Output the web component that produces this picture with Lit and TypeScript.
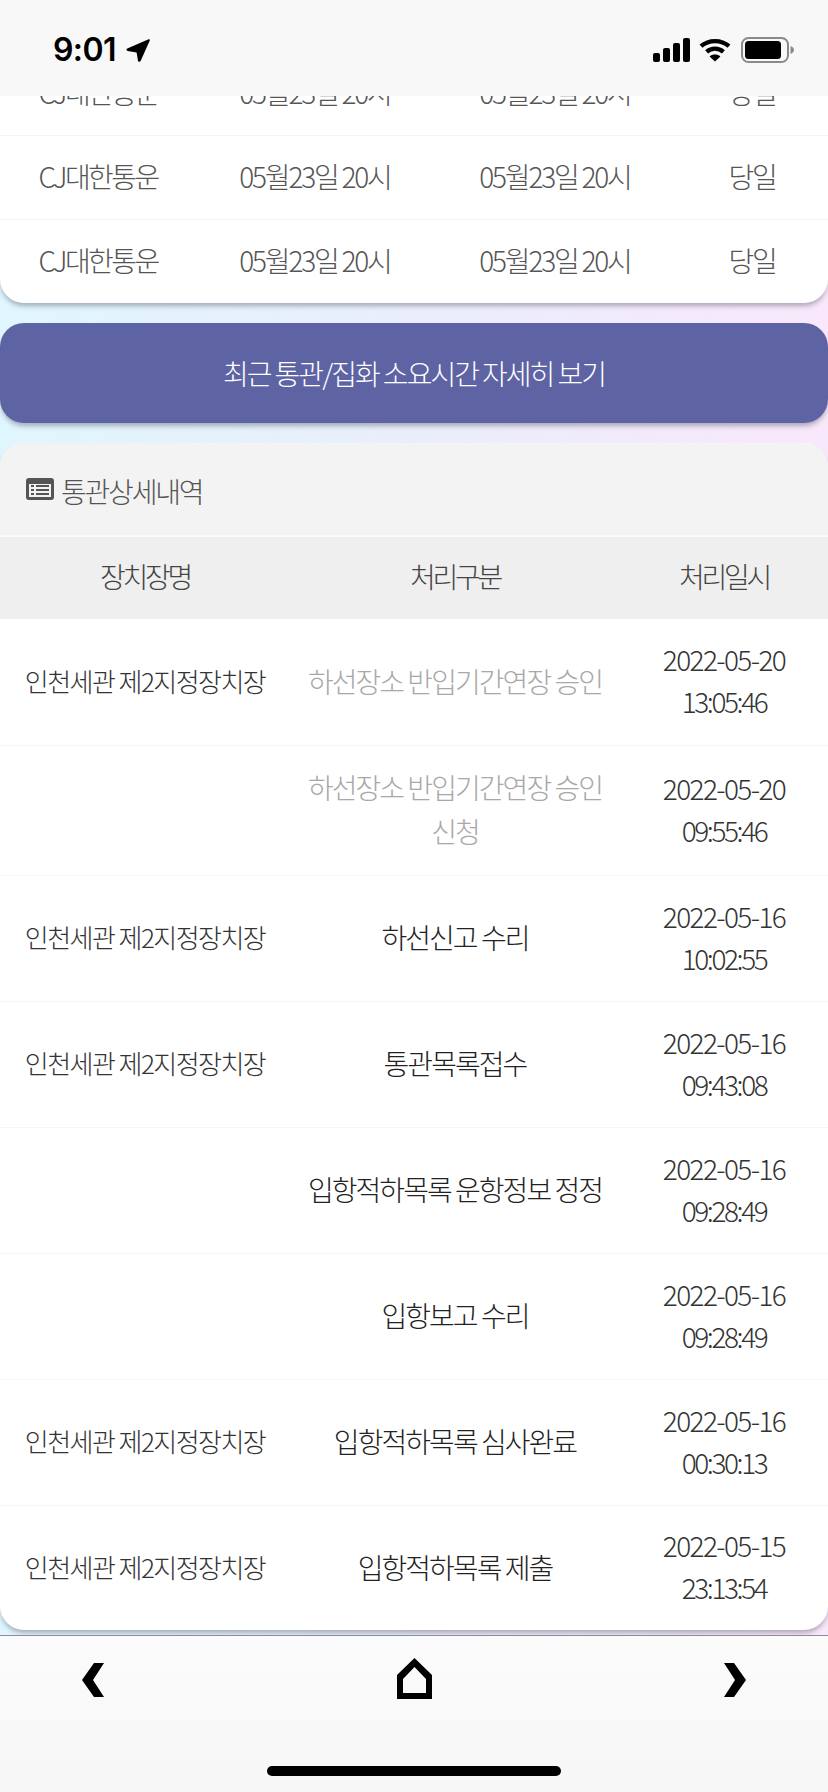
import { LitElement, html, css, svg } from "lit";
import { customElement } from "lit/decorators.js";

const carrierRows = [0, 1, 2];

const detailRows = [
  { place: "인천세관 제2지정장치장", kind: ["하선장소 반입기간연장 승인"], muted: true, d: "2022-05-20", t: "13:05:46" },
  { place: "", kind: ["하선장소 반입기간연장 승인", "신청"], muted: true, d: "2022-05-20", t: "09:55:46" },
  { place: "인천세관 제2지정장치장", kind: ["하선신고 수리"], muted: false, d: "2022-05-16", t: "10:02:55" },
  { place: "인천세관 제2지정장치장", kind: ["통관목록접수"], muted: false, d: "2022-05-16", t: "09:43:08" },
  { place: "", kind: ["입항적하목록 운항정보 정정"], muted: false, d: "2022-05-16", t: "09:28:49" },
  { place: "", kind: ["입항보고 수리"], muted: false, d: "2022-05-16", t: "09:28:49" },
  { place: "인천세관 제2지정장치장", kind: ["입항적하목록 심사완료"], muted: false, d: "2022-05-16", t: "00:30:13" },
  { place: "인천세관 제2지정장치장", kind: ["입항적하목록 제출"], muted: false, d: "2022-05-15", t: "23:13:54" },
];

@customElement("app-root")
export class AppRoot extends LitElement {
  static styles = css`
    :host {
      display: flex;
      flex-direction: column;
      width: 828px;
      height: 1792px;
      overflow: hidden;
      font-family: "Noto Sans CJK KR", "Noto Sans", sans-serif;
      font-weight: 300;
      background: #f8f8f8;
    }
    .status {
      flex: none;
      height: 96px;
      background: #f8f8f8;
      display: flex;
      align-items: flex-start;
      padding: 37px 34px 0 53px;
      box-sizing: border-box;
      position: relative;
      z-index: 2;
    }
    .clock {
      font-family: Inter, sans-serif;
      font-weight: 600;
      font-size: 32px;
      line-height: 26px;
      color: #000;
      letter-spacing: -0.6px;
    }
    .arrow { margin: 1px 0 0 10px; width: 24px; height: 24px; }
    .status-right { margin-left: auto; display: flex; align-items: flex-start; gap: 9px; }
    .signal { width: 37px; height: 24px; margin-top: 1px; }
    .wifi { width: 32px; height: 25px; }
    .battery { width: 53px; height: 26px; margin-left: 1px; }

    .content {
      flex: none;
      height: 1539px;
      overflow: hidden;
      background: linear-gradient(90deg, #e0f6fe 0%, #eaeefc 50%, #f9e8fb 100%);
    }
    .scroll { margin-top: -44px; display: flex; flex-direction: column; }

    .card {
      background: #fff;
      border-radius: 0 0 24px 24px;
      box-shadow: 0 4px 5px -1px rgba(60, 60, 80, 0.38);
    }
    .c-row {
      display: grid;
      grid-template-columns: 196px 238px 242px 152px;
      height: 84px;
      box-sizing: border-box;
      padding-bottom: 4px;
      align-items: center;
      text-align: center;
      font-size: 28px;
      letter-spacing: -2.2px;
      color: #555;
      border-bottom: 1px solid #f4f4f4;
    }
    .c-row:last-child { border-bottom: none; height: 83px; }
    .carrier { letter-spacing: -2.6px; }

    .cta {
      margin-top: 20px;
      height: 100px;
      border-radius: 24px;
      background: #5e63a3;
      box-shadow: 0 4px 5px -1px rgba(60, 60, 80, 0.38);
      color: #fff;
      font-size: 28px;
      letter-spacing: -2px;
      display: flex;
      align-items: center;
      justify-content: center;
    }

    .panel {
      margin-top: 20px;
      border-radius: 24px;
      background: #fff;
      box-shadow: 0 4px 5px -1px rgba(60, 60, 80, 0.38);
      overflow: hidden;
    }
    .title {
      height: 92px;
      box-sizing: content-box;
      background: #f3f3f3;
      display: flex;
      align-items: center;
      padding-left: 26px;
      gap: 7px;
      font-size: 28px;
      letter-spacing: -2.2px;
      color: #555;
      border-bottom: 2px solid #fafafa;
    }
    .title span { padding-top: 3px; }
    .title svg { width: 28px; height: 22px; flex: none; }
    .grid {
      display: grid;
      grid-template-columns: 290px 330px 208px;
      align-items: center;
      text-align: center;
    }
    .thead {
      height: 82px;
      box-sizing: border-box;
      padding-bottom: 5px;
      background: #efefef;
      font-size: 28px;
      letter-spacing: -3.2px;
      color: #444;
    }
    .row {
      height: 126px;
      box-sizing: border-box;
      border-bottom: 1px solid #f6f6f6;
      color: #333;
    }
    .row.first { height: 127px; }
    .row.tall { height: 130px; }
    .row.last { border-bottom: none; height: 124px; }
    .place { font-size: 26px; padding-bottom: 4px; letter-spacing: -1.55px; color: #333; white-space: nowrap; }
    .kind { font-size: 28px; line-height: 44px; padding-bottom: 3px; letter-spacing: -1.95px; color: #222; }
    .kind.muted { color: #a8a8a8; }
    .when { padding-bottom: 4px; }
    .date, .time { font-size: 28px; line-height: 42px; color: #333; }
    .date { letter-spacing: -1.6px; }
    .time { letter-spacing: -2.4px; }

    .nav {
      flex: none;
      height: 157px;
      box-sizing: border-box;
      border-top: 1px solid #8d8d9c;
      background: linear-gradient(180deg, #fbfbfb, #f7f7f7);
      position: relative;
      display: flex;
      justify-content: space-between;
      align-items: flex-start;
      padding: 0 82px;
    }
    .nav .chev { width: 22px; height: 34px; margin-top: 27px; }
    .nav .home { width: 35px; height: 41px; margin: 22px 0 0 1px; }
    .indicator {
      position: absolute;
      left: 267px;
      top: 130px;
      width: 294px;
      height: 10px;
      border-radius: 5px;
      background: #000;
    }
  `;

  private statusIcons() {
    return html`
      <div class="status-right">
        <svg class="signal" viewBox="0 0 37 24">
          <rect x="0" y="15" width="7" height="9" rx="2" />
          <rect x="10" y="10" width="7" height="14" rx="2" />
          <rect x="20" y="5" width="7" height="19" rx="2" />
          <rect x="30" y="0" width="7" height="24" rx="2" />
        </svg>
        <svg class="wifi" viewBox="0 0 32 25" fill="none" stroke="#000" stroke-width="4.4">
          <path d="M2 9.2C9.8 2.4 22.2 2.4 30 9.2" />
          <path d="M7.6 14.8C12.4 10.6 19.6 10.6 24.4 14.8" />
          <path d="M16 24.6L10.6 19.4C13.6 16.9 18.4 16.9 21.4 19.4Z" fill="#000" stroke="none" />
        </svg>
        <svg class="battery" viewBox="0 0 53 26">
          <rect x="1" y="1" width="46" height="24" rx="6.5" fill="none" stroke="#8a8a8a" stroke-width="2" />
          <rect x="4" y="4" width="36" height="18" rx="3.5" fill="#000" />
          <path d="M49.5 9C51.5 9.8 53 11.2 53 13C53 14.8 51.5 16.2 49.5 17Z" fill="#8a8a8a" />
        </svg>
      </div>
    `;
  }

  render() {
    return html`
      <div class="status">
        <span class="clock">9:01</span>
        <svg class="arrow" viewBox="0 0 24 24">
          <path d="M22.6 1.2C23.4 1.0 24 1.6 23.8 2.5L14.6 23C14 24.2 12.2 24.1 12 22.7L10.6 14.4L1.6 12.9C0.2 12.6 0 11 1.3 10.4Z" />
        </svg>
        ${this.statusIcons()}
      </div>

      <div class="content">
        <div class="scroll">
          <div class="card">
            ${carrierRows.map(
              () => html`<div class="c-row">
                <span class="carrier">CJ대한통운</span><span>05월23일 20시</span><span>05월23일 20시</span><span>당일</span>
              </div>`
            )}
          </div>

          <div class="cta">최근 통관/집화 소요시간 자세히 보기</div>

          <div class="panel">
            <div class="title">
              <svg viewBox="0 0 28 22">
                <rect width="28" height="22" rx="3" fill="#555" />
                <rect x="3" y="6" width="22" height="13" fill="#f3f3f3" />
                ${[8, 12, 16].map(
                  (y) => svg`<rect x="5" y=${y - 1} width="3" height="2" fill="#555" /><rect x="10" y=${y - 1} width="13" height="2" fill="#555" />`
                )}
              </svg>
              <span>통관상세내역</span>
            </div>
            <div class="grid thead"><span>장치장명</span><span>처리구분</span><span>처리일시</span></div>
            ${detailRows.map(
              (r, i) => html`<div class="grid row ${i === 0 ? "first" : ""} ${r.kind.length > 1 ? "tall" : ""} ${i === detailRows.length - 1 ? "last" : ""}">
                <div class="place">${r.place}</div>
                <div class="kind ${r.muted ? "muted" : ""}">${r.kind.map((k) => html`<div>${k}</div>`)}</div>
                <div class="when"><div class="date">${r.d}</div><div class="time">${r.t}</div></div>
              </div>`
            )}
          </div>
        </div>
      </div>

      <div class="nav">
        <svg class="chev" viewBox="0 0 22 34"><path d="M12 0H22L11 17L22 34H12L0 17Z" /></svg>
        <svg class="home" viewBox="0 0 35 41">
          <path fill-rule="evenodd" d="M0 17L17.5 0L35 17V41H0ZM6 21V35H29V21L17.5 9Z" />
        </svg>
        <svg class="chev" viewBox="0 0 22 34"><path d="M10 0H0L11 17L0 34H10L22 17Z" /></svg>
        <div class="indicator"></div>
      </div>
    `;
  }
}
